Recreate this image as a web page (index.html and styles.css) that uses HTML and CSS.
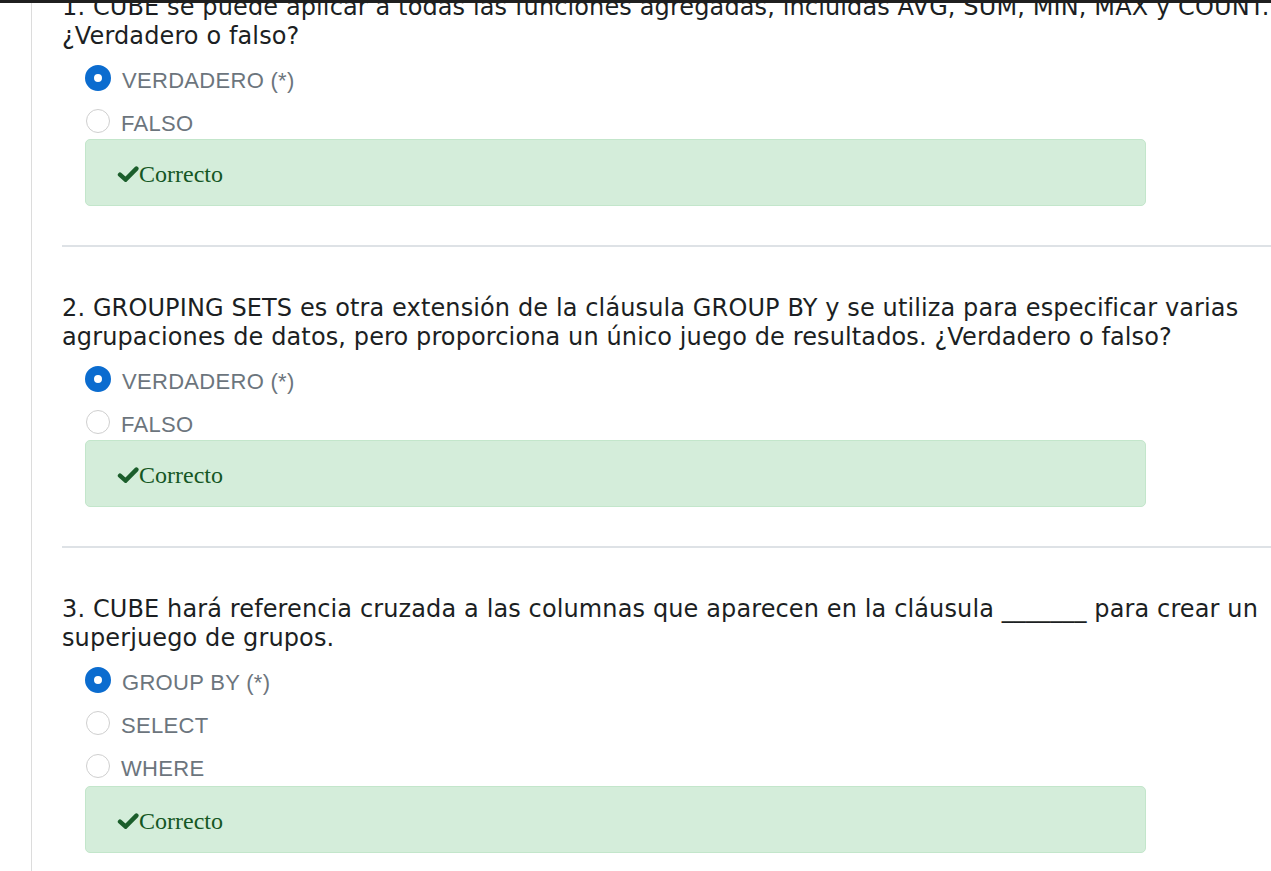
FILE: index.html
```html
<!DOCTYPE html>
<html lang="es">
<head>
<meta charset="utf-8">
<title>Cuestionario</title>
<link rel="stylesheet" href="styles.css">
</head>
<body>
<div class="topbar"></div>
<main class="page">
  <section class="question first">
    <p class="q-text">1. CUBE se puede aplicar a todas las funciones agregadas, incluidas AVG, SUM, MIN, MAX y COUNT. ¿Verdadero o falso?</p>
    <div class="options">
      <div class="option"><span class="radio checked"></span><span class="label">VERDADERO (*)</span></div>
      <div class="option"><span class="radio"></span><span class="label">FALSO</span></div>
    </div>
    <div class="result"><svg class="check" viewBox="0 0 22 16" width="22" height="16"><path d="M3 8.6 L8.6 13.6 L19.4 2.6"/></svg><span>Correcto</span></div>
  </section>
  <hr class="sep">
  <section class="question">
    <p class="q-text">2. GROUPING SETS es otra extensión de la cláusula GROUP BY y se utiliza para especificar varias agrupaciones de datos, pero proporciona un único juego de resultados. ¿Verdadero o falso?</p>
    <div class="options">
      <div class="option"><span class="radio checked"></span><span class="label">VERDADERO (*)</span></div>
      <div class="option"><span class="radio"></span><span class="label">FALSO</span></div>
    </div>
    <div class="result"><svg class="check" viewBox="0 0 22 16" width="22" height="16"><path d="M3 8.6 L8.6 13.6 L19.4 2.6"/></svg><span>Correcto</span></div>
  </section>
  <hr class="sep">
  <section class="question">
    <p class="q-text">3. CUBE hará referencia cruzada a las columnas que aparecen en la cláusula _______ para crear un superjuego de grupos.</p>
    <div class="options">
      <div class="option"><span class="radio checked"></span><span class="label">GROUP BY (*)</span></div>
      <div class="option"><span class="radio"></span><span class="label">SELECT</span></div>
      <div class="option"><span class="radio"></span><span class="label">WHERE</span></div>
    </div>
    <div class="result last"><svg class="check" viewBox="0 0 22 16" width="22" height="16"><path d="M3 8.6 L8.6 13.6 L19.4 2.6"/></svg><span>Correcto</span></div>
  </section>
</main>
</body>
</html>
```
FILE: styles.css
```css
html, body {
  margin: 0;
  padding: 0;
  background: #ffffff;
  overflow: hidden;
}

.topbar {
  position: fixed;
  top: 0;
  left: 0;
  right: 0;
  height: 3px;
  background: #1f1f1f;
  z-index: 5;
}

.page {
  margin-left: 31px;
  border-left: 1px solid #dcdcdc;
  padding-left: 30px;
  padding-bottom: 60px;
  min-height: 100vh;
  box-sizing: border-box;
}

.question {
  padding-top: 47px;
}

.question.first {
  padding-top: 0;
  margin-top: -7px;
}

.q-text {
  margin: 0;
  font-family: "DejaVu Sans", Verdana, sans-serif;
  font-size: 24px;
  line-height: 29px;
  letter-spacing: 0.12px;
  color: #1c1f23;
}

.options {
  margin: 12px 0 0 23px;
  display: flex;
  flex-direction: column;
  gap: 13px;
}

.option {
  display: flex;
  align-items: center;
  height: 30px;
  gap: 11px;
}

.radio {
  width: 24px;
  height: 24px;
  border-radius: 50%;
  border: 1px solid #cfcfcf;
  box-sizing: border-box;
  background: #fff;
  flex: none;
  margin-left: 1px;
}

.radio.checked {
  width: 26px;
  height: 26px;
  margin-left: 0;
  border: 9px solid #0b6ccf;
}

.label {
  font-family: "Liberation Sans", Arial, sans-serif;
  font-size: 22px;
  letter-spacing: 0.3px;
  color: #6c757d;
  padding-top: 5px;
}

.result {
  margin: 3px 0 0 23px;
  width: 1061px;
  height: 67px;
  box-sizing: border-box;
  background: #d4edda;
  border: 1px solid #c3e6cb;
  border-radius: 5px;
  display: flex;
  align-items: center;
  padding-left: 31px;
  padding-top: 4px;
  font-family: "Liberation Serif", "Times New Roman", serif;
  font-size: 24px;
  color: #155724;
}

.result.last {
  margin-top: 5px;
}

.check {
  fill: none;
  stroke: #1b5e2b;
  stroke-width: 4.4;
  stroke-linecap: round;
  stroke-linejoin: miter;
  flex: none;
  margin-top: -2px;
}

.sep {
  margin: 39px 0 0 0;
  border: 0;
  height: 2px;
  background: #dee2e6;
}
```
